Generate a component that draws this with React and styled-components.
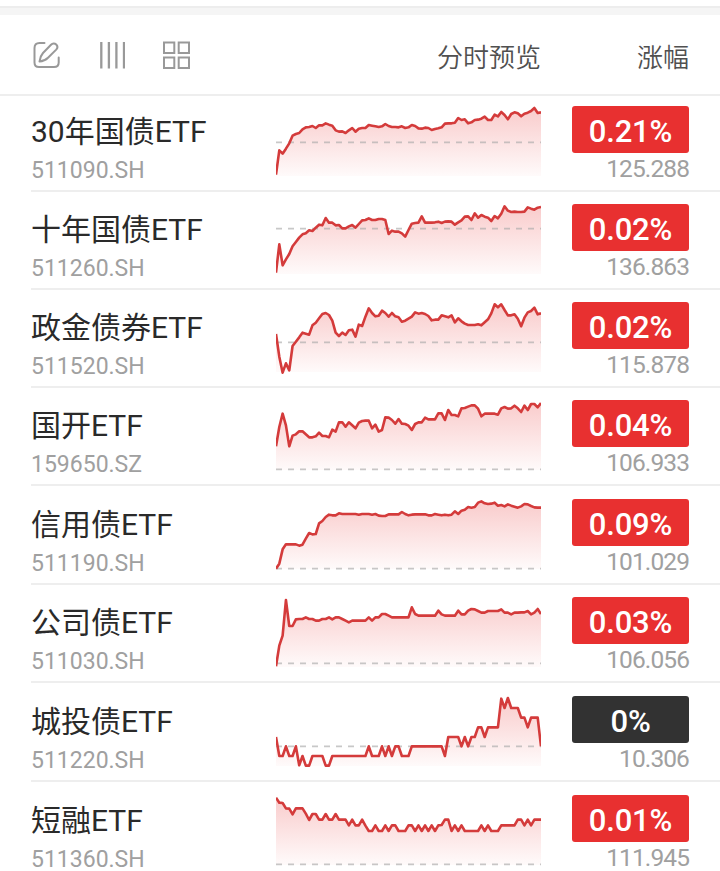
import React from 'react';
import styled, { createGlobalStyle } from 'styled-components';

const GlobalStyle = createGlobalStyle`
  * {
    box-sizing: border-box;
  }

  body {
    margin: 0;
    background: #fff;
    font-family: Roboto, 'Noto Sans CJK SC', sans-serif;
  }
`

const Page = styled.div`
  width: 720px;
  height: 871px;
  padding-top: 6px;
  overflow: hidden;
  background: #fff;
`

const TopStrip = styled.div`
  height: 9px;
  background: #f5f5f5;
  border-top: 2px solid #ededed;
`

const Header = styled.header`
  display: flex;
  align-items: center;
  height: 81px;
  padding: 1px 31px 0 32px;
  border-bottom: 2px solid #eeeeee;
  color: #505050;
  font-size: 26px;
`

const Tools = styled.div`
  display: flex;
  align-items: center;
  flex: 1;
  gap: 37px;

  svg {
    display: block;
    fill: none;
    stroke: #999;
  }
`

const HeaderLabel = styled.div`
  width: ${props => props.$width}px;
  font-weight: 350;
  text-align: right;
`

const List = styled.div`
  padding-left: 31px;
`

// lead is the space above the content, the rest of the row never changes
const Row = styled.div`
  display: flex;
  align-items: flex-start;
  height: ${props => 94 + props.$lead}px;
  padding: ${props => props.$lead}px 31px 0 0;
  border-bottom: 2px solid #eeeeee;
`

const Title = styled.div`
  width: 245px;
  padding-top: 13.5px;
`

const Name = styled.div`
  color: #2a2a2a;
  font-size: 30px;
  line-height: 40px;
  white-space: nowrap;
`

const Code = styled.div`
  margin-top: 8px;
  color: #a0a0a0;
  font-size: 23px;
  line-height: 22px;
`

const ChartBox = styled.svg`
  display: block;
  width: 265px;
  height: 90px;
`

const Quote = styled.div`
  width: 117px;
  margin-left: 31px;
  padding-top: 8.4px;
  text-align: right;
`

const Badge = styled.div`
  height: 46.4px;
  border-radius: 3px;
  background: ${props => props.$flat ? '#323232' : '#e83030'};
  color: #fff;
  font-size: 31px;
  font-weight: 500;
  line-height: 52px;
  letter-spacing: -0.2px;
  text-align: center;
`

const Price = styled.div`
  margin-top: 1.5px;
  color: #a0a0a0;
  font-size: 24.5px;
  line-height: 30px;
  letter-spacing: -0.9px;
`

const funds = [
  {
    name: '30年国债ETF', code: '511090.SH', change: '0.21%', price: '125.288', lead: 2, base: 133,
    points: [
      230, 157, 167, 152, 136, 113, 108, 105, 94, 88, 87, 84, 90, 82, 82, 76, 80, 83, 97, 101,
      100, 105, 97, 90, 101, 92, 90, 90, 81, 83, 85, 87, 85, 78, 84, 87, 87, 88, 85, 90,
      88, 81, 84, 91, 92, 89, 90, 96, 93, 91, 88, 77, 76, 76, 74, 60, 66, 64, 76, 73,
      66, 65, 62, 56, 66, 66, 50, 55, 42, 51, 64, 48, 43, 46, 55, 47, 44, 39, 30, 45, 43
    ]
  },
  {
    name: '十年国债ETF', code: '511260.SH', change: '0.02%', price: '136.863', lead: 4, base: 98,
    points: [
      230, 145, 208, 190, 174, 151, 138, 125, 115, 112, 103, 105, 95, 86, 88, 66, 80, 80, 88, 87,
      97, 97, 91, 87, 95, 84, 73, 72, 67, 72, 72, 69, 69, 72, 114, 104, 107, 107, 112, 122,
      102, 83, 81, 80, 61, 80, 80, 80, 79, 77, 81, 77, 76, 77, 86, 79, 73, 62, 61, 72,
      52, 65, 57, 62, 65, 75, 60, 67, 53, 31, 44, 48, 47, 48, 48, 47, 34, 38, 41, 35, 33
    ]
  },
  {
    name: '政金债券ETF', code: '511520.SH', change: '0.02%', price: '115.878', lead: 4, base: 145,
    points: [
      120, 188, 236, 208, 229, 156, 143, 130, 116, 119, 122, 94, 86, 73, 60, 57, 63, 80, 116, 126,
      116, 123, 109, 107, 128, 92, 96, 68, 43, 57, 67, 65, 50, 57, 68, 57, 67, 70, 83, 80,
      74, 68, 55, 59, 57, 60, 66, 79, 77, 77, 64, 67, 70, 64, 85, 73, 82, 89, 93, 93,
      93, 91, 94, 85, 76, 58, 31, 40, 31, 48, 64, 64, 61, 74, 97, 71, 55, 51, 41, 61, 58
    ]
  },
  {
    name: '国开ETF', code: '159650.SZ', change: '0.04%', price: '106.933', lead: 4, base: 232,
    points: [
      163, 105, 65, 100, 163, 131, 127, 118, 118, 127, 136, 136, 133, 122, 132, 132, 136, 113, 119, 91,
      91, 104, 91, 100, 109, 92, 87, 86, 86, 109, 98, 119, 114, 76, 77, 84, 95, 81, 95, 96,
      101, 114, 96, 91, 91, 77, 82, 82, 82, 64, 64, 84, 54, 69, 69, 73, 49, 48, 44, 40,
      40, 50, 73, 65, 65, 65, 65, 68, 49, 45, 50, 49, 41, 49, 60, 41, 54, 36, 36, 46, 33
    ]
  },
  {
    name: '信用债ETF', code: '511190.SH', change: '0.09%', price: '101.029', lead: 5, base: 233,
    points: [
      233, 218, 175, 160, 160, 160, 160, 164, 161, 143, 126, 130, 129, 97, 90, 78, 71, 73, 73, 67,
      69, 69, 69, 69, 69, 71, 69, 69, 69, 71, 69, 74, 75, 75, 70, 70, 70, 70, 63, 69,
      73, 71, 70, 70, 70, 70, 73, 73, 69, 71, 73, 71, 73, 71, 61, 69, 59, 56, 48, 50,
      48, 35, 31, 37, 39, 38, 35, 44, 42, 46, 40, 44, 47, 50, 46, 39, 40, 45, 49, 50, 50
    ]
  },
  {
    name: '公司债ETF', code: '511030.SH', change: '0.03%', price: '106.056', lead: 4, base: 223,
    points: [
      232, 170, 140, 33, 111, 111, 91, 90, 90, 85, 90, 90, 95, 95, 90, 90, 85, 91, 85, 85,
      90, 95, 100, 95, 95, 95, 95, 95, 85, 95, 85, 85, 75, 75, 80, 85, 85, 85, 85, 85,
      85, 55, 75, 80, 80, 80, 80, 80, 80, 65, 76, 80, 80, 80, 80, 65, 76, 76, 65, 60,
      61, 66, 71, 71, 66, 66, 66, 66, 61, 71, 71, 76, 71, 71, 70, 70, 66, 76, 71, 60, 75
    ]
  },
  {
    name: '城投债ETF', code: '511220.SH', change: '0%', price: '10.306', lead: 5, base: 175,
    points: [
      147, 204, 204, 175, 204, 204, 175, 232, 204, 233, 233, 204, 204, 204, 204, 233, 233, 204, 204, 204,
      204, 204, 204, 204, 204, 204, 204, 204, 175, 204, 204, 204, 175, 204, 175, 204, 175, 175, 204, 204,
      204, 175, 175, 175, 175, 175, 175, 175, 175, 175, 175, 204, 147, 147, 147, 147, 175, 147, 175, 147,
      147, 118, 118, 147, 118, 118, 118, 118, 32, 60, 30, 60, 60, 60, 89, 89, 118, 89, 89, 89, 175
    ]
  },
  {
    name: '短融ETF', code: '511360.SH', change: '0.01%', price: '111.945', lead: 5, base: 232,
    points: [
      32, 47, 48, 64, 65, 82, 64, 64, 64, 80, 99, 81, 81, 98, 98, 81, 98, 98, 81, 98,
      98, 98, 115, 98, 115, 115, 98, 116, 132, 132, 115, 132, 132, 115, 132, 115, 115, 132, 132, 132,
      115, 115, 132, 115, 132, 115, 132, 115, 132, 115, 114, 98, 98, 132, 115, 132, 115, 132, 132, 132,
      132, 132, 115, 132, 115, 132, 132, 132, 115, 115, 115, 115, 115, 98, 98, 115, 98, 115, 98, 98, 98
    ]
  }
]

const EditIcon = () => (
  <svg width="28" height="28" viewBox="0 0 28 28" strokeWidth="2" strokeLinecap="round" strokeLinejoin="round">
    <path d="M12.5 2H7.500Q2.500 2 2.500 7V21.500Q2.500 26 7 26H22Q26.700 26 26.700 21.500V16.500" />
    <path d="M7.500 20.500C7.800 17 9 14.300 11 12L19 3.800C20.500 2.200 22.800 2.200 24.200 3.500C25.700 5 25.700 7 24.200 8.600L16 16.800C13.800 19 11 20.300 7.500 20.500Z" />
  </svg>
)

const BarsIcon = () => (
  <svg width="28" height="28" viewBox="0 0 28 28" strokeWidth="2.300">
    <path d="M4.300 1V27.500M11.900 1V27.500M19.400 1V27.500M27 1V27.500" />
  </svg>
)

const GridIcon = () => (
  <svg width="28" height="28" viewBox="0 0 28 28" strokeWidth="2">
    <rect x="2" y="1.500" width="10.300" height="10.500" />
    <rect x="16.700" y="1.500" width="10.300" height="10.500" />
    <rect x="2" y="16.500" width="10.300" height="10.500" />
    <rect x="16.700" y="16.500" width="10.300" height="10.500" />
  </svg>
)

const Chart = ({ id, points, base }) => {
  const step = 795 / (points.length - 1)
  const line = points.map((y, i) => `${(i * step).toFixed(1)},${y}`).join(' ')

  return (
    <ChartBox viewBox="0 0 795 270">
      <defs>
        <linearGradient id={id} gradientUnits="userSpaceOnUse" x1="0" y1="30" x2="0" y2="236">
          <stop offset="0" stopColor="#e83030" stopOpacity="0.25" />
          <stop offset="1" stopColor="#e83030" stopOpacity="0.02" />
        </linearGradient>
      </defs>
      <polygon points={`0,234 ${line} 795,234`} fill={`url(#${id})`} />
      <line x1="0" x2="795" y1={base} y2={base} stroke="#aaa" strokeOpacity="0.65" strokeWidth="5.500" strokeDasharray="18 18" />
      <polyline points={line} fill="none" stroke="#d43b3b" strokeWidth="7.800" strokeLinejoin="round" />
    </ChartBox>
  )
}

const App = () => (
  <>
    <GlobalStyle />
    <Page>
      <TopStrip />
      <Header>
        <Tools>
          <EditIcon />
          <BarsIcon />
          <GridIcon />
        </Tools>
        <HeaderLabel $width={140}>分时预览</HeaderLabel>
        <HeaderLabel $width={148}>涨幅</HeaderLabel>
      </Header>
      <List>
        {funds.map(fund => (
          <Row key={fund.code} $lead={fund.lead}>
            <Title>
              <Name>{fund.name}</Name>
              <Code>{fund.code}</Code>
            </Title>
            <Chart id={`fill-${fund.code.slice(0, 6)}`} points={fund.points} base={fund.base} />
            <Quote>
              <Badge $flat={fund.change === '0%'}>{fund.change}</Badge>
              <Price>{fund.price}</Price>
            </Quote>
          </Row>
        ))}
      </List>
    </Page>
  </>
)

export default App
